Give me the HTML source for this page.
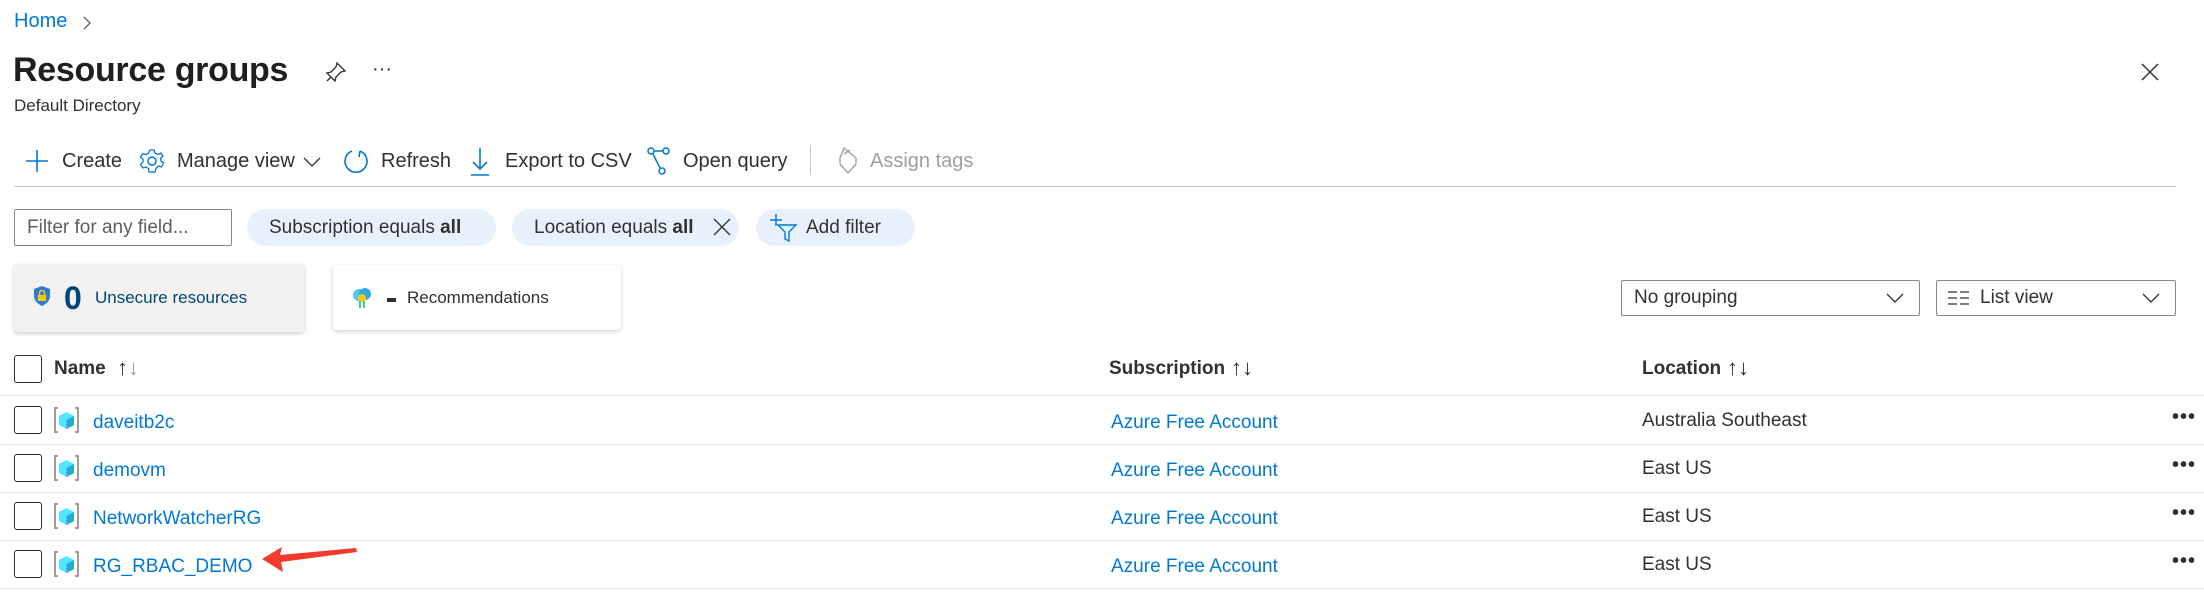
<!DOCTYPE html>
<html><head><meta charset="utf-8"><style>
*{box-sizing:border-box;margin:0;padding:0}
body{width:2204px;height:612px;background:#fff;font-family:"Liberation Sans",sans-serif;color:#323130;position:relative;overflow:hidden}
.a{position:absolute;white-space:nowrap}
.link{color:#0078d4}
.tb{font-size:20px;top:149px;line-height:24px}
.pill{position:absolute;top:209px;height:37px;border-radius:19px;background:#e8f1fb;font-size:19px;line-height:37px;padding:0 22px}
.hdr{font-size:19px;font-weight:bold;top:357px;line-height:24px}
.cb{position:absolute;left:14px;width:28px;height:28px;border:1.5px solid #323130;border-radius:3px}
.hl{position:absolute;left:0;right:0;height:1px;background:#e6e6e6}
.row{font-size:19px;line-height:24px}
.dots{position:absolute;left:2172px;font-size:20px;letter-spacing:1px;font-weight:bold;color:#323130}
.sa{position:absolute;font-size:22px;top:355px;line-height:26px}
</style></head><body>
<div class="a link" style="left:14px;top:10px;font-size:20px">Home</div>
<svg class="a" style="left:82px;top:15px" width="10" height="16"><path d="M2 2 L8 8 L2 14" fill="none" stroke="#605e5c" stroke-width="1.3"/></svg>
<div class="a" style="left:13px;top:51px;font-size:34px;font-weight:bold;color:#201f1e;letter-spacing:-0.3px">Resource groups</div>
<svg class="a" style="left:324px;top:60px" width="24" height="24"><path d="M13 3 L21 11 L17 12 L12 17 L11 21 L3 13 L7 12 L12 7 Z M7 17 L3 21" fill="none" stroke="#323130" stroke-width="1.4"/></svg>
<div class="a" style="left:372px;top:58px;font-size:20px">···</div>
<div class="a" style="left:14px;top:96px;font-size:17px;color:#323130">Default Directory</div>
<svg class="a" style="left:2140px;top:62px" width="20" height="20"><path d="M2 2 L18 18 M18 2 L2 18" stroke="#323130" stroke-width="1.5"/></svg>

<svg class="a" style="left:25px;top:149px" width="24" height="24"><path d="M12 1 V23 M1 12 H23" stroke="#0078d4" stroke-width="1.6"/></svg>
<div class="a tb" style="left:62px">Create</div>
<svg class="a" style="left:139px;top:148px" width="26" height="26" viewBox="0 0 26 26"><circle cx="13" cy="13" r="4" fill="none" stroke="#0078d4" stroke-width="1.5"/><path d="M11 2 H15 L16 5 L19 6.5 L22 5 L24 8 L21.5 10.5 L22 13 L24.5 15 L22.5 19 L19.5 18 L17 20.5 L16 24 H10 L9.5 20.5 L7 19 L4 20 L1.5 16.5 L4 14 V11 L1.5 9 L4 5.5 L7 6.5 L9.5 5 Z" fill="none" stroke="#0078d4" stroke-width="1.3"/></svg>
<div class="a tb" style="left:177px">Manage view</div>
<svg class="a" style="left:303px;top:156px" width="18" height="12"><path d="M1 2 L9 10 L17 2" fill="none" stroke="#323130" stroke-width="1.3"/></svg>
<svg class="a" style="left:343px;top:147px" width="26" height="28"><path d="M9 4 A11 11 0 1 0 17 4 M17 4 L16 10" fill="none" stroke="#0078d4" stroke-width="1.6"/></svg>
<div class="a tb" style="left:381px">Refresh</div>
<svg class="a" style="left:470px;top:147px" width="20" height="30"><path d="M10 1 V22 M3 15 L10 22 L17 15 M1 28 H19" fill="none" stroke="#0078d4" stroke-width="1.6"/></svg>
<div class="a tb" style="left:505px">Export to CSV</div>
<svg class="a" style="left:647px;top:146px" width="26" height="30"><circle cx="4" cy="5" r="3" fill="none" stroke="#0078d4" stroke-width="1.5"/><circle cx="19" cy="5" r="3" fill="none" stroke="#0078d4" stroke-width="1.5"/><circle cx="15" cy="25" r="3" fill="none" stroke="#0078d4" stroke-width="1.5"/><path d="M7 5 H16 M6 8 L13 22" stroke="#0078d4" stroke-width="1.5"/></svg>
<div class="a tb" style="left:683px">Open query</div>
<div class="a" style="left:810px;top:145px;width:1px;height:30px;background:#c8c6c4"></div>
<svg class="a" style="left:836px;top:146px" width="24" height="30"><path d="M8 2 L20 12 L20 18 L12 27 L4 18 L4 12 Z M8 8 L14 4" fill="none" stroke="#a19f9d" stroke-width="1.4"/></svg>
<div class="a tb" style="left:870px;color:#a19f9d">Assign tags</div>
<div class="a" style="left:14px;top:186px;width:2162px;height:1px;background:#c8c6c4"></div>

<div class="a" style="left:14px;top:209px;width:218px;height:37px;border:1px solid #8a8886;border-radius:2px;font-size:19px;line-height:35px;padding-left:12px;color:#605e5c">Filter for any field...</div>
<div class="pill" style="left:247px;width:249px">Subscription equals <b>all</b></div>
<div class="pill" style="left:512px;width:227px">Location equals <b>all</b></div>
<svg class="a" style="left:712px;top:217px" width="20" height="20"><path d="M2 2 L18 18 M18 2 L2 18" stroke="#323130" stroke-width="1.3"/></svg>
<div class="pill" style="left:756px;width:159px;padding-left:50px">Add filter</div>
<svg class="a" style="left:770px;top:213px" width="30" height="30"><path d="M6 1 V13 M0 7 H12" stroke="#0078d4" stroke-width="1.5"/><path d="M8 12 H26 L19 19 V28 L15 26 V19 Z" fill="none" stroke="#0078d4" stroke-width="1.4"/></svg>

<div class="a" style="left:14px;top:264px;width:290px;height:68px;background:#f3f2f1;border-radius:4px;box-shadow:0 1.5px 4px rgba(0,0,0,.22)"></div>
<svg class="a" style="left:33px;top:285px" width="18" height="22"><path d="M9 1 L17 4 V11 C17 16 13 19 9 21 C5 19 1 16 1 11 V4 Z" fill="#2e7bd6"/><rect x="5" y="10" width="8" height="6" fill="#f2c811"/><path d="M6.5 10 V8 A2.5 2.5 0 0 1 11.5 8 V10" fill="none" stroke="#f2c811" stroke-width="1.4"/></svg>
<div class="a" style="left:64px;top:280px;font-size:32px;font-weight:bold;color:#004578">0</div>
<div class="a" style="left:95px;top:288px;font-size:17px;color:#004578">Unsecure resources</div>
<div class="a" style="left:333px;top:265px;width:288px;height:65px;background:#fff;border-radius:4px;box-shadow:0 1.5px 4px rgba(0,0,0,.2)"></div>
<svg class="a" style="left:351px;top:286px" width="22" height="24"><circle cx="8" cy="9" r="6" fill="#50c8f0"/><circle cx="14" cy="8" r="6" fill="#2ea8e0"/><circle cx="11" cy="12" r="4" fill="#f2c811"/><path d="M9 15 V22 M13 15 V22" stroke="#3cc7a0" stroke-width="2"/></svg>
<div class="a" style="left:387px;top:298px;width:9px;height:4px;background:#323130"></div>
<div class="a" style="left:407px;top:288px;font-size:17px">Recommendations</div>

<div class="a" style="left:1621px;top:280px;width:299px;height:36px;border:1px solid #8a8886;border-radius:2px;font-size:19px;line-height:34px;padding-left:12px">No grouping</div>
<svg class="a" style="left:1886px;top:292px" width="18" height="12"><path d="M1 2 L9 10 L17 2" fill="none" stroke="#323130" stroke-width="1.3"/></svg>
<div class="a" style="left:1936px;top:280px;width:240px;height:36px;border:1px solid #8a8886;border-radius:2px;font-size:19px;line-height:34px;padding-left:43px">List view</div>
<svg class="a" style="left:1948px;top:290px" width="22" height="16"><path d="M0 2 H9 M12 2 H21 M0 8 H9 M12 8 H21 M0 14 H9 M12 14 H21" stroke="#323130" stroke-width="1.3"/></svg>
<svg class="a" style="left:2142px;top:292px" width="18" height="12"><path d="M1 2 L9 10 L17 2" fill="none" stroke="#323130" stroke-width="1.3"/></svg>

<div class="cb" style="top:355px"></div>
<div class="a hdr" style="left:54px">Name</div>
<div class="sa" style="left:117px">↑<span style="color:#a19f9d">↓</span></div>
<div class="a hdr" style="left:1109px">Subscription</div>
<div class="sa" style="left:1231px">↑↓</div>
<div class="a hdr" style="left:1642px">Location</div>
<div class="sa" style="left:1727px">↑↓</div>
<div class="hl" style="top:395px"></div>

<div class="cb" style="top:406px"></div>
<div class="cb" style="top:454px"></div>
<div class="cb" style="top:502px"></div>
<div class="cb" style="top:550px"></div>
<svg class="a" style="left:53px;top:407px" width="28" height="170">
<defs><g id="ic"><path d="M5 1 H2 V25 H5 M22 1 H25 V25 H22" fill="none" stroke="#a19f9d" stroke-width="2"/><path d="M13.5 5 L21 9 V18 L13.5 22 L6 18 V9 Z" fill="#50e6ff"/><path d="M13.5 13 L21 9 V18 L13.5 22 Z" fill="#2ca8d8"/></g></defs>
<use href="#ic" y="0"/><use href="#ic" y="48"/><use href="#ic" y="96"/><use href="#ic" y="144"/></svg>
<div class="a row link" style="left:93px;top:411px">daveitb2c</div>
<div class="a row link" style="left:93px;top:459px">demovm</div>
<div class="a row link" style="left:93px;top:507px">NetworkWatcherRG</div>
<div class="a row link" style="left:93px;top:555px">RG_RBAC_DEMO</div>
<div class="a row link" style="left:1111px;top:411px">Azure Free Account</div>
<div class="a row link" style="left:1111px;top:459px">Azure Free Account</div>
<div class="a row link" style="left:1111px;top:507px">Azure Free Account</div>
<div class="a row link" style="left:1111px;top:555px">Azure Free Account</div>
<div class="a row" style="left:1642px;top:409px">Australia Southeast</div>
<div class="a row" style="left:1642px;top:457px">East US</div>
<div class="a row" style="left:1642px;top:505px">East US</div>
<div class="a row" style="left:1642px;top:553px">East US</div>
<div class="dots" style="top:406px">•••</div>
<div class="dots" style="top:454px">•••</div>
<div class="dots" style="top:502px">•••</div>
<div class="dots" style="top:550px">•••</div>
<div class="hl" style="top:444px"></div>
<div class="hl" style="top:492px"></div>
<div class="hl" style="top:540px"></div>
<div class="hl" style="top:588px"></div>

<svg class="a" style="left:257px;top:541px" width="105" height="36"><path d="M5 18 L25 6 L23 14 L99 7 L100 11 L24 21 L26 31 Z" fill="#f03a2e"/></svg>
</body></html>
